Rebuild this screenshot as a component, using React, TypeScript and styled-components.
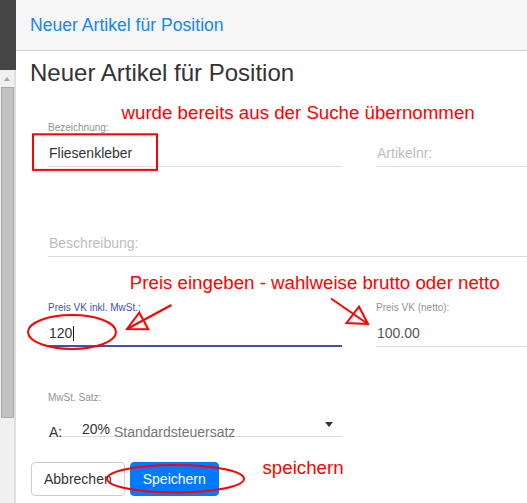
import React from 'react';
import styled, { createGlobalStyle } from 'styled-components';

const GlobalStyle = createGlobalStyle`
  html, body {
    margin: 0;
    padding: 0;
  }
  body {
    font-family: 'Liberation Sans', Arial, sans-serif;
    background: #fff;
  }
`;

export const App = () => {
  return (
    <>
      <GlobalStyle />
      <Page>
        <Sidebar>
          <SideTop />
          <ScrollTrack>
            <ScrollArrow />
            <ScrollThumb />
          </ScrollTrack>
        </Sidebar>

        <Modal>
          <ModalHeader>
            <ModalTitle>Neuer Artikel für Position</ModalTitle>
          </ModalHeader>

          <ModalBody>
            <Heading>Neuer Artikel für Position</Heading>

            <FieldGrid>
              <Field>
                <FieldLabel>Bezeichnung:</FieldLabel>
                <FieldInput>Fliesenkleber</FieldInput>
              </Field>
              <Field>
                <FieldLabel />
                <FieldInput $placeholder>Artikelnr:</FieldInput>
              </Field>

              <Field $wide>
                <FieldLabel />
                <FieldInput $placeholder>Beschreibung:</FieldInput>
              </Field>

              <Field>
                <FieldLabel $focused>Preis VK inkl. MwSt.:</FieldLabel>
                <FieldInput $focused>
                  120
                  <Caret />
                </FieldInput>
              </Field>
              <Field>
                <FieldLabel>Preis VK (netto):</FieldLabel>
                <FieldInput $muted>100.00</FieldInput>
              </Field>

              <Field>
                <FieldLabel>MwSt. Satz:</FieldLabel>
                <SelectBox>
                  <SelectValue>
                    <SelectPrefix>A:</SelectPrefix>
                    <Rate>20%</Rate> <RateName>Standardsteuersatz</RateName>
                  </SelectValue>
                  <SelectCaret />
                </SelectBox>
              </Field>
            </FieldGrid>

            <ButtonRow>
              <Button type="button">Abbrechen</Button>
              <Button type="button" $primary>
                Speichern
              </Button>
            </ButtonRow>
          </ModalBody>
        </Modal>

        {/* red hand-drawn annotations on top of the screenshot */}
        <Overlay viewBox="0 0 527 503">
          <rect x="33" y="134.3" width="124" height="35.6" />
          <ellipse cx="72" cy="332" rx="44" ry="17" />
          <line x1="171.5" y1="305" x2="127" y2="329" />
          <polygon points="127,329 139.3,312.7 148.3,329.3" />
          <line x1="331" y1="298.5" x2="368" y2="324" />
          <polygon points="346.5,323 359,306.7 368,324" />
          <ellipse cx="175.5" cy="478.7" rx="68.5" ry="13.8" />
        </Overlay>
        <Note $x={121.5} $y={103.7}>
          wurde bereits aus der Suche übernommen
        </Note>
        <Note $x={129.8} $y={273.7}>
          Preis eingeben - wahlweise brutto oder netto
        </Note>
        <Note $x={262.5} $y={459.2}>
          speichern
        </Note>
      </Page>
    </>
  );
};

export default App;

const Page = styled.div`
  position: relative;
  display: flex;
  width: 527px;
  height: 503px;
  overflow: hidden;
`;

const Sidebar = styled.div`
  width: 16px;
  flex-shrink: 0;
  display: flex;
  flex-direction: column;
`;

const SideTop = styled.div`
  height: 70px;
  background: #464646;
`;

const ScrollTrack = styled.div`
  flex: 1;
  background: #f0f0f0;
  border-right: 2px solid #dedede;
`;

const ScrollArrow = styled.div`
  height: 17px;
  display: flex;
  justify-content: center;
  align-items: center;

  &::before {
    content: '';
    width: 0;
    height: 0;
    border-left: 3.5px solid transparent;
    border-right: 3.5px solid transparent;
    border-bottom: 4px solid #a3a3a3;
    margin-top: 1px;
  }
`;

const ScrollThumb = styled.div`
  box-sizing: border-box;
  margin-left: 1px;
  width: 13px;
  height: 331px;
  background: #c2c2c2;
  border: 1px solid #a8a8a8;
`;

const Modal = styled.div`
  flex: 1;
  min-width: 0;
  overflow: hidden;
  background: #fff;
`;

const ModalHeader = styled.div`
  height: 50px;
  background: #f6f6f6;
  border-bottom: 1px solid #d0d0d0;
  padding-left: 14px;
`;

const ModalTitle = styled.div`
  font-size: 17.6px;
  line-height: 50px;
  color: #1486f8;
  white-space: nowrap;
`;

const ModalBody = styled.div`
  padding-left: 15px;
`;

const Heading = styled.h2`
  margin: 8px 0 0 -1px;
  font-size: 24px;
  font-weight: normal;
  line-height: 28.8px;
  color: #333;
  white-space: nowrap;
`;

const FieldGrid = styled.div`
  display: grid;
  grid-template-columns: 294px 294px;
  column-gap: 34px;
  row-gap: 45px;
  margin: 34px 0 0 17px;
`;

const Field = styled.div<{ $wide?: boolean }>`
  display: flex;
  flex-direction: column;
  grid-column: ${(p) => (p.$wide ? 'span 2' : 'auto')};
`;

const FieldLabel = styled.div<{ $focused?: boolean }>`
  height: 12px;
  margin-bottom: 6px;
  font-size: 10px;
  line-height: 12px;
  color: ${(p) => (p.$focused ? '#3f51b5' : '#929292')};
  white-space: nowrap;
`;

const FieldInput = styled.div<{
  $focused?: boolean;
  $placeholder?: boolean;
  $muted?: boolean;
}>`
  box-sizing: border-box;
  height: 27px;
  padding-left: 1px;
  font-size: 14px;
  line-height: 26px;
  white-space: nowrap;
  color: ${(p) => (p.$placeholder ? '#bdbdbd' : p.$muted ? '#555' : '#333')};
  border-bottom: ${(p) => (p.$focused ? '2px solid #3f51b5' : '1px solid #dddddd')};
`;

const Caret = styled.span`
  display: inline-block;
  width: 1px;
  height: 15px;
  margin-left: 1px;
  background: #111;
  vertical-align: -3px;
`;

const SelectBox = styled.div`
  box-sizing: border-box;
  height: 27px;
  display: flex;
  border-bottom: 1px solid #dddddd;
`;

const SelectValue = styled.div`
  flex: 1;
  padding: 12px 0 0 1px;
  font-size: 14px;
  line-height: 14px;
  white-space: nowrap;
`;

const SelectPrefix = styled.span`
  display: inline-block;
  width: 33px;
  color: #333;
`;

const Rate = styled.span`
  color: #333;
  vertical-align: 3px;
`;

const RateName = styled.span`
  color: #777;
`;

const SelectCaret = styled.div`
  align-self: center;
  margin: 4px 9px 0 0;
  border-left: 4px solid transparent;
  border-right: 4px solid transparent;
  border-top: 5px solid #333;
`;

const ButtonRow = styled.div`
  display: flex;
  gap: 5px;
  margin-top: 25px;
`;

const Button = styled.button<{ $primary?: boolean }>`
  box-sizing: border-box;
  height: 34px;
  padding: 0 12px;
  font-family: 'Liberation Sans', Arial, sans-serif;
  font-size: 14px;
  border-radius: 4px;
  border: 1px solid ${(p) => (p.$primary ? '#007bff' : '#cccccc')};
  background: ${(p) => (p.$primary ? '#007bff' : '#fff')};
  color: ${(p) => (p.$primary ? '#fff' : '#333')};
`;

const Overlay = styled.svg`
  position: absolute;
  left: 0;
  top: 0;
  width: 527px;
  height: 503px;
  pointer-events: none;
  fill: none;
  stroke: #ff0000;
  stroke-width: 2;
`;

const Note = styled.div<{ $x: number; $y: number }>`
  position: absolute;
  left: ${(p) => p.$x}px;
  top: ${(p) => p.$y}px;
  font-size: 18.7px;
  line-height: 18.7px;
  color: #ff0000;
  white-space: nowrap;
`;
